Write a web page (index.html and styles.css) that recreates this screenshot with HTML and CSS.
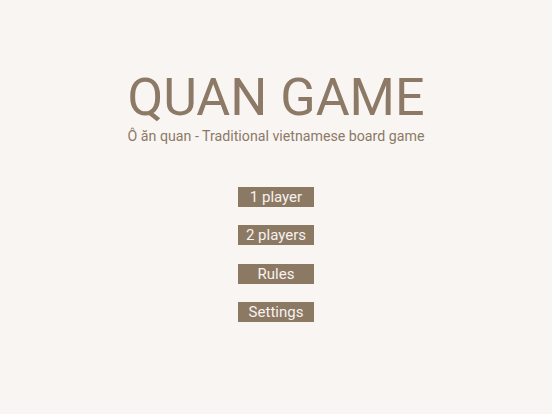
FILE: index.html
```html
<!DOCTYPE html>
<html>
<head>
<meta charset="utf-8">
<link rel="stylesheet" href="styles.css">
</head>
<body>
<div class="screen">
  <h1 class="title">QUAN GAME</h1>
  <p class="subtitle">Ô ăn quan - Traditional vietnamese board game</p>
  <div class="menu">
    <button class="btn">1 player</button>
    <button class="btn">2 players</button>
    <button class="btn">Rules</button>
    <button class="btn">Settings</button>
  </div>
</div>
</body>
</html>
```
FILE: styles.css
```css
html, body {
  margin: 0;
  padding: 0;
  background: #f9f5f2;
}
.screen {
  width: 552px;
  height: 414px;
  display: flex;
  flex-direction: column;
  align-items: center;
  font-family: Roboto, "Liberation Sans", sans-serif;
  color: #8c7a67;
}
.title {
  margin: 69px 0 0 0;
  font-size: 52px;
  font-weight: 400;
  line-height: 58px;
}
.subtitle {
  margin: 0;
  font-size: 14.2px;
  line-height: 18px;
}
.menu {
  margin-top: 42px;
  display: flex;
  flex-direction: column;
  align-items: center;
  gap: 18.33px;
}
.btn {
  width: 76px;
  height: 20px;
  border: none;
  padding: 0;
  background: #8c7964;
  color: #f7f2ee;
  font-family: Roboto, "Liberation Sans", sans-serif;
  font-size: 15px;
  line-height: 20px;
}
```
